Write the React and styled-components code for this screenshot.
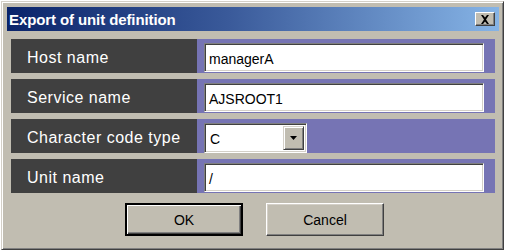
import React from "react";
import styled, { createGlobalStyle } from "styled-components";

const color = {
  face: "#c1bdb1",
  light: "#d4d0c8",
  white: "#ffffff",
  shadow: "#808080",
  dark: "#404040",
  label: "#404040",
  field: "#7674b4",
};

const GlobalStyle = createGlobalStyle`
  html, body {
    margin: 0;
    padding: 0;
    background: #ffffff;
  }
  body {
    font-family: "Liberation Sans", Arial, sans-serif;
  }
`;

const Window = styled.div`
  box-sizing: border-box;
  width: 503px;
  height: 249px;
  margin: 1px 0 0 1px;
  padding: 4px 4px 11px;
  background: ${color.face};
  border: 1px solid;
  border-color: ${color.light} ${color.dark} ${color.dark} ${color.light};
  box-shadow: inset 1px 1px ${color.white}, inset -1px -1px ${color.shadow};
  display: flex;
  flex-direction: column;
`;

const TitleBar = styled.div`
  height: 24px;
  margin: 1px 0 0 1px;
  padding: 0 4px 0 2px;
  display: flex;
  align-items: center;
  justify-content: space-between;
  background: linear-gradient(to right, #0a246a 0%, #3a5a9a 45%, #86b4e6 100%);
`;

const Title = styled.span`
  color: ${color.white};
  font-size: 15px;
  font-weight: bold;
  letter-spacing: -0.1px;
`;

const CloseButton = styled.button`
  box-sizing: border-box;
  width: 20px;
  height: 14px;
  padding: 0;
  display: flex;
  align-items: center;
  justify-content: center;
  background: ${color.face};
  border: 1px solid;
  border-color: ${color.white} ${color.dark} ${color.dark} ${color.white};
  box-shadow: inset -1px -1px ${color.shadow};
`;

const Content = styled.div`
  display: flex;
  flex-direction: column;
  gap: 6px;
  padding: 8px 4px 0 5px;
`;

const Row = styled.div`
  display: grid;
  grid-template-columns: 186px 1fr;
  height: 34px;
`;

const Label = styled.div`
  background: ${color.label};
  color: ${color.white};
  font-size: 16px;
  letter-spacing: 0.5px;
  display: flex;
  align-items: center;
  padding: 4px 0 0 16px;
`;

const Field = styled.div`
  background: ${color.field};
  display: flex;
  align-items: flex-start;
  padding: 4px 11px 0 7px;
`;

const sunken = `
  box-sizing: border-box;
  border: 1px solid;
  border-color: ${color.shadow} ${color.white} ${color.white} ${color.shadow};
  box-shadow: inset 1px 1px ${color.dark}, inset -1px -1px ${color.light};
  background: ${color.white};
`;

const TextBox = styled.div`
  ${sunken}
  flex: 1;
  height: 29px;
  padding: 3px 4px 0;
  display: flex;
  align-items: center;
  font-size: 14px;
  color: #000;
`;

const Select = styled.div`
  ${sunken}
  width: 103px;
  height: 30px;
  padding: 2px;
  display: flex;
  align-items: stretch;
  font-size: 14px;
`;

const SelectValue = styled.span`
  flex: 1;
  padding: 2px 0 0 3px;
  display: flex;
  align-items: center;
`;

const DropButton = styled.div`
  box-sizing: border-box;
  width: 21px;
  background: ${color.face};
  border: 1px solid;
  border-color: ${color.light} ${color.dark} ${color.dark} ${color.light};
  box-shadow: inset 1px 1px ${color.white}, inset -1px -1px ${color.shadow};
  display: flex;
  align-items: center;
  justify-content: center;
`;

const Buttons = styled.div`
  display: flex;
  justify-content: center;
  gap: 23px;
  margin-top: 10px;
  padding-left: 4px;
`;

const Button = styled.button`
  box-sizing: border-box;
  width: 118px;
  height: 33px;
  font-family: "Liberation Sans", Arial, sans-serif;
  font-size: 14px;
  color: #000;
  background: ${color.face};
  border: 1px solid;
  border-color: ${color.white} ${color.dark} ${color.dark} ${color.white};
  box-shadow: inset -1px -1px ${color.shadow}, inset 1px 1px ${color.light};
  ${(props) =>
    props.primary &&
    `
    border: 2px solid #000;
    box-shadow: inset 1px 1px ${color.white}, inset -1px -1px ${color.dark}, inset -2px -2px ${color.shadow};
  `}
`;

function CloseIcon() {
  return (
    <svg width="10" height="9" viewBox="0 0 10 9">
      <path d="M1 0h2l2 2.5L7 0h2L6 4.5 9 9H7L5 6.5 3 9H1l3-4.5z" fill="#000" />
    </svg>
  );
}

function ArrowIcon() {
  return (
    <svg width="9" height="5" viewBox="0 0 9 5">
      <path d="M1 0h7L4.5 4z" fill="#000" />
    </svg>
  );
}

const fields = [
  { label: "Host name", value: "managerA" },
  { label: "Service name", value: "AJSROOT1" },
  { label: "Character code type", value: "C", select: true },
  { label: "Unit name", value: "/" },
];

function App() {
  return (
    <>
      <GlobalStyle />
      <Window>
        <TitleBar>
          <Title>Export of unit definition</Title>
          <CloseButton>
            <CloseIcon />
          </CloseButton>
        </TitleBar>
        <Content>
          {fields.map((f) => (
            <Row key={f.label}>
              <Label>{f.label}</Label>
              <Field>
                {f.select ? (
                  <Select>
                    <SelectValue>{f.value}</SelectValue>
                    <DropButton>
                      <ArrowIcon />
                    </DropButton>
                  </Select>
                ) : (
                  <TextBox>{f.value}</TextBox>
                )}
              </Field>
            </Row>
          ))}
        </Content>
        <Buttons>
          <Button primary>OK</Button>
          <Button>Cancel</Button>
        </Buttons>
      </Window>
    </>
  );
}

export default App;
